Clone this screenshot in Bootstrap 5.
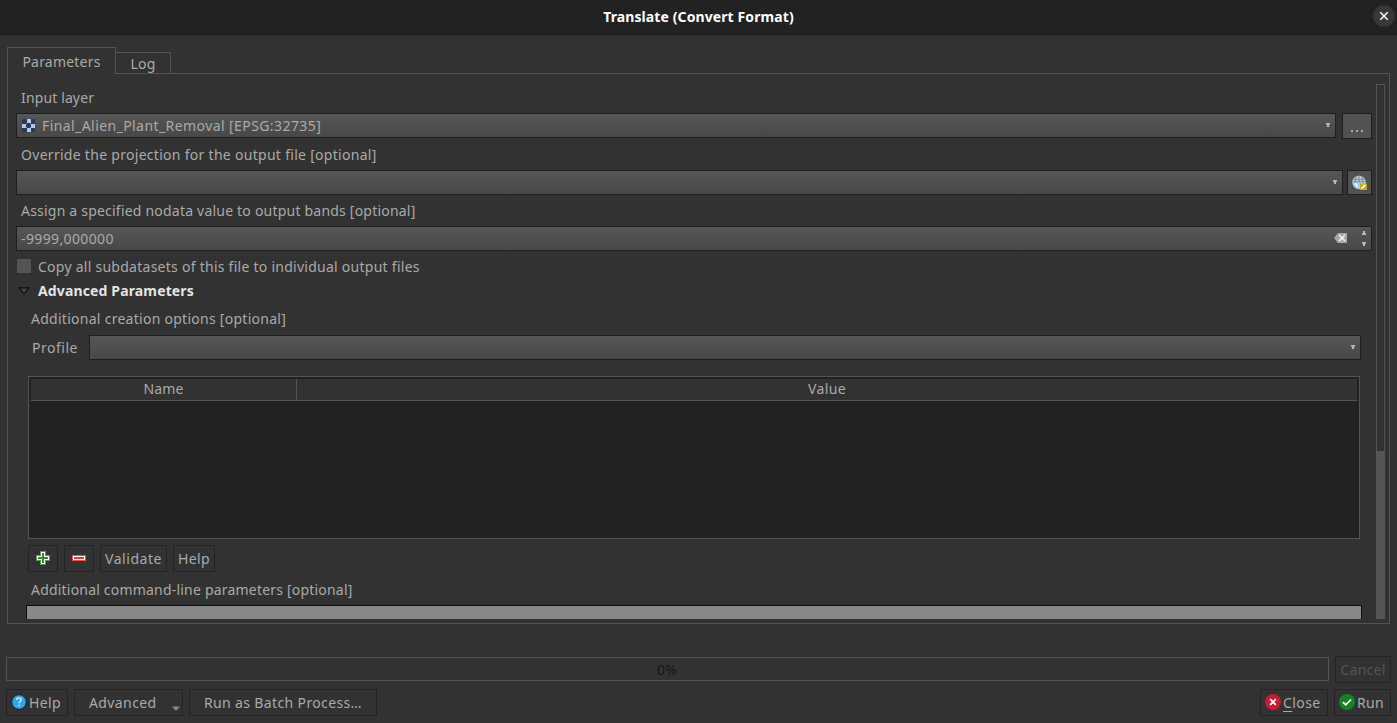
<!DOCTYPE html>
<html lang="en">
<head>
<meta charset="utf-8">
<meta name="viewport" content="width=device-width, initial-scale=1">
<title>Translate (Convert Format)</title>
<link href="https://cdn.jsdelivr.net/npm/bootstrap@5.3.0/dist/css/bootstrap.min.css" rel="stylesheet">
<style>
:root{--line:#545454;--dark:#1e1e1e;--edge:#242424}
body{height:723px;overflow:hidden;background:#323232;color:#aaa;font:14px/20px "Noto Sans",sans-serif;letter-spacing:.26px;white-space:nowrap}
svg{display:block;flex:none}
.titlebar{height:35px;background:#222;border-bottom:1px solid #191919;color:#fff;letter-spacing:.1px;padding-bottom:1px}
.win-close{right:2px;top:5px;width:22px;height:22px;background:#373737}
.dlg-tabs{height:27px;margin:12px 7px 0;z-index:1}
.dlg-tab{border:1px solid var(--line);border-bottom:0;height:22px;width:56px;margin-left:-1px;padding-top:1px}
.dlg-tab.current{width:109px;height:27px;background:#323232;margin-left:0;padding-top:2px}
.pane{height:551px;margin:-1px 7px 0;border:1px solid var(--line);padding:10px 4px 4px 8px}
.scroller{width:1356px;height:535px;overflow:hidden}
.lbl{padding-left:5px}
.field{height:25px;border:1px solid var(--dark);background:linear-gradient(#565656,#484848)}
.arrow{margin-top:-2px}
.tool{border:1px solid var(--dark);background:#525252}
.h26{height:26px}
.check{width:14px;height:14px;background:#545454;margin:-1px 0 0 1px}
.sbar{width:9px;height:535px;border:1px solid var(--line)}
.sbar div{height:168px;background:#555;margin:0 -1px -1px}
.opts{height:163px;border:1px solid var(--line);background:#222;margin:16px 12px 0;padding:2px 2px 0}
.opts-head{height:22px;background:#323232;border-bottom:1px solid var(--line)}
.pbtn{border:1px solid var(--edge);background:#323232;height:27px}
.edit{height:30px;border:1px solid #0e0e0e;background:#888;margin:0 10px}
.prog{height:24px;width:1323px;border:1px solid var(--line);color:#161616;margin-top:1px;padding:2px 1px 0 0}
.dim{color:#545454}
.sp0{letter-spacing:.13px}.sp2{letter-spacing:.2px}.sp4{letter-spacing:.4px}.sp5{letter-spacing:.52px}
.mnemonic{text-decoration:underline;text-underline-offset:3px;text-decoration-thickness:1px}
</style>
</head>
<body>
<header class="titlebar position-relative d-flex align-items-center justify-content-center fw-bold">
  Translate (Convert Format)
  <span class="win-close position-absolute rounded-circle d-flex align-items-center justify-content-center">
    <svg width="10" height="10" viewBox="0 0 10 10" stroke="#fff" stroke-width="1.5"><path d="M1.3 1.3l7.400 7.400M8.700 1.300L1.300 8.700"/></svg>
  </span>
</header>

<nav class="dlg-tabs position-relative d-flex align-items-end">
  <div class="dlg-tab current d-flex align-items-center justify-content-center sp2">Parameters</div>
  <div class="dlg-tab d-flex align-items-center justify-content-center sp0">Log</div>
</nav>

<main class="pane d-flex justify-content-between">
  <div class="scroller">
    <div class="lbl d-flex align-items-start sp0" style="height:29px;padding-top:4px">Input layer</div>
    <div class="d-flex h26">
      <div class="field d-flex align-items-center flex-grow-1 ps-1" style="padding-right:5px">
        <svg width="14" height="13" viewBox="-1 0 14 13" shape-rendering="crispEdges"><path fill="#2b3a52" d="M0 0h13v13H0z"/><path fill="#afc9e8" d="M5 0h4v4H5zM5 9h4v4H5zM0 5h4v4H0zM9 5h4v4H9z"/><path fill="#6f87a8" d="M4 4h1v1H4zM8 4h1v1H8zM4 8h1v1H4zM8 8h1v1H8z"/></svg>
        <span class="flex-grow-1" style="margin-left:7px;letter-spacing:.42px">Final_Alien_Plant_Removal [EPSG:32735]</span>
        <svg class="arrow" width="4" height="4" viewBox="0 0 4 4"><path fill="#b8b8b8" d="M0 0h4v1.500L3 2v2H1V2L0 1.500z"/></svg>
      </div>
      <div class="tool h26 d-flex align-items-end justify-content-center" style="width:30px;margin-left:6px"><svg class="mb-1" width="12" height="4" viewBox="0 0 12 4" fill="#aaa" shape-rendering="crispEdges"><path d="M0 0h2v2H0zM5 0h2v2H5zM10 0h2v2h-2z"/></svg></div>
    </div>
    <div class="lbl d-flex align-items-center" style="height:31px"><span style="letter-spacing:.29px">Override the projection for the output file [optional]</span></div>
    <div class="d-flex">
      <div class="field d-flex align-items-center justify-content-end flex-grow-1" style="padding-right:5px">
        <svg class="arrow" width="4" height="4" viewBox="0 0 4 4"><path fill="#b8b8b8" d="M0 0h4v1.500L3 2v2H1V2L0 1.500z"/></svg>
      </div>
      <div class="tool d-flex align-items-center justify-content-center" style="width:25px;height:25px;margin-left:4px">
        <svg width="16" height="16" viewBox="0.500 0 16 16"><path fill="#c2c8cc" d="M.6 7C1.400 3 4 .8 7.500.8S13.600 3 14.400 7z"/><path fill="#a9cdf2" d="M.8 7h13.600c0 4-3 7.200-6.900 7.200S.8 11 .8 7z"/><path fill="none" stroke="#6e7880" stroke-width=".7" d="M2 4.300h11M7.500 1v6M4.800 1.500C4 3 3.600 5 3.600 7M10.200 1.500c.8 1.500 1.200 3.500 1.200 5.500M.8 6.800h13.600"/><path fill="#e8f3ff" d="M3 8.500h2.500l1 3-1.500.5z"/><path fill="#ccab08" d="M8.500 8.500h7V15h-7z"/><path stroke="#fff" stroke-width="1.800" d="M10 13.600l3.800-3.800"/></svg>
      </div>
    </div>
    <div class="lbl d-flex align-items-center" style="height:31px;letter-spacing:.21px">Assign a specified nodata value to output bands [optional]</div>
    <div class="field d-flex align-items-center">
      <span class="flex-grow-1" style="padding-left:4px;letter-spacing:.38px">-9999,000000</span>
      <svg style="margin-top:-1px" width="13" height="10" viewBox="0 0 13 10"><path fill="#a8a8a8" d="M4 0h9v10H4L0 5z"/><path stroke="#fff" stroke-width="1.100" d="M5 2l6 6M11 2L5 8"/></svg>
      <svg style="margin:-1px 5px 0 14px" width="5" height="15" viewBox="0 0 5 15" fill="#b8b8b8"><path d="M1 4h4V2.500L4 2V0H2v2l-1 .5zM1 11h4v1.500l-1 .5v2H2v-2l-1-.5z"/></svg>
    </div>
    <div class="d-flex align-items-center" style="height:31px"><span class="check"></span><span style="margin-left:7px">Copy all subdatasets of this file to individual output files</span></div>
    <div class="d-flex align-items-center fw-bold" style="height:18px;color:#e4e4e4;letter-spacing:.14px">
      <svg style="margin:0 8px 0 2px" width="12" height="8" viewBox="0 0 12 8" fill="#484848" stroke="#0c0c0c" stroke-width="1.300"><path d="M1 .8h10L6 6.800z"/></svg>Advanced Parameters</div>
    <div class="d-flex align-items-center" style="height:35px;padding:2px 0 0 15px;letter-spacing:.27px">Additional creation options [optional]</div>
    <div class="d-flex align-items-center" style="padding:0 11px 0 16px">
      <span class="sp5" style="width:57px">Profile</span>
      <div class="field d-flex align-items-center justify-content-end flex-grow-1" style="padding-right:5px"><svg class="arrow" width="4" height="4" viewBox="0 0 4 4"><path fill="#b8b8b8" d="M0 0h4v1.500L3 2v2H1V2L0 1.500z"/></svg></div>
    </div>
    <div class="opts">
      <div class="opts-head d-flex text-center sp0">
        <div style="width:266px;border-right:1px solid var(--line)">Name</div>
        <div class="flex-grow-1 sp4">Value</div>
      </div>
    </div>
    <div class="d-flex" style="gap:6px;padding:6px 0 0 12px">
      <div class="pbtn h26 d-flex align-items-start justify-content-center" style="width:30px;padding-top:5px"><svg width="14" height="14" viewBox="0 0 14 14" shape-rendering="crispEdges"><path fill="#5c965c" d="M4 0h6v4h4v6h-4v4H4v-4H0V4h4z"/><path fill="#fff" d="M5 1h4v4h4v4H9v4H5V9H1V5h4z"/><path fill="#3c823c" d="M6 2h2v4h4v2H8v4H6V8H2V6h4z"/></svg></div>
      <div class="pbtn h26 d-flex align-items-start justify-content-center" style="width:30px;padding-top:9px"><svg width="14" height="6" viewBox="0 0 14 6" shape-rendering="crispEdges"><path fill="#f04c4c" d="M0 0h14v6H0z"/><path fill="#fff" d="M1 1h12v4H1z"/><path fill="#e83838" d="M2 2h10v2H2z"/></svg></div>
      <div class="pbtn d-flex align-items-center justify-content-center sp5" style="width:67px">Validate</div>
      <div class="pbtn d-flex align-items-center justify-content-center sp4" style="width:42px">Help</div>
    </div>
    <div class="d-flex align-items-center sp2" style="height:33px;padding:3px 0 0 15px">Additional command-line parameters [optional]</div>
    <div class="edit"></div>
  </div>
  <div class="sbar d-flex flex-column justify-content-end"><div></div></div>
</main>

<footer>
  <div class="d-flex align-items-start" style="margin:32px 6px 0;gap:6px">
    <div class="prog d-flex align-items-center justify-content-center">0%</div>
    <div class="pbtn dim d-flex align-items-center justify-content-center" style="width:56px">Cancel</div>
  </div>
  <div class="d-flex" style="margin:6px 6px 0;gap:6px">
    <div class="pbtn d-flex align-items-center sp4" style="width:62px;padding-left:4px">
      <svg style="margin-top:-1px" width="16" height="16" viewBox="0 0 16 16"><circle cx="8" cy="8" r="7.300" fill="#35a5ea" stroke="#16222c" stroke-width="1"/><path fill="none" stroke="#e4f4ff" stroke-width="1.300" d="M5.800 6c0-1.500 1-2.200 2.200-2.200s2.200.7 2.200 1.900c0 1.500-2.100 1.600-2.100 3.500M8.100 10.700v1.500"/></svg><span style="margin-left:2px">Help</span>
    </div>
    <div class="pbtn position-relative sp4" style="width:109px;padding:3px 0 0 14px">Advanced
      <svg class="position-absolute" style="right:2px;bottom:4px" width="8" height="5" viewBox="0 0 8 5"><path fill="#888" d="M0 .5h8L4.500 4.500h-1z"/></svg></div>
    <div class="pbtn d-flex align-items-center justify-content-center" style="width:188px;letter-spacing:.36px">Run as Batch Process…</div>
    <div class="pbtn ms-auto d-flex align-items-center sp4" style="width:68px;padding-left:4px">
      <svg style="margin-top:-1px" width="16" height="16" viewBox="0 0 16 16"><circle cx="8" cy="8" r="8" fill="#c81a30"/><path stroke="#fff" stroke-width="1.900" d="M5.200 5.200l5.600 5.600M10.800 5.200l-5.600 5.600"/></svg><span style="margin-left:2px"><span class="mnemonic">C</span>lose</span>
    </div>
    <div class="pbtn d-flex align-items-center" style="width:57px;padding-left:4px">
      <svg style="margin-top:-1px" width="16" height="16" viewBox="0 0 16 16"><circle cx="8" cy="8" r="8" fill="#138423"/><path fill="none" stroke="#fff" stroke-width="1.800" d="M4 8.200l2.700 2.600L12 5.600"/></svg><span style="margin-left:2px">Run</span>
    </div>
  </div>
</footer>
<script src="https://cdn.jsdelivr.net/npm/bootstrap@5.3.0/dist/js/bootstrap.bundle.min.js"></script>
</body>
</html>
